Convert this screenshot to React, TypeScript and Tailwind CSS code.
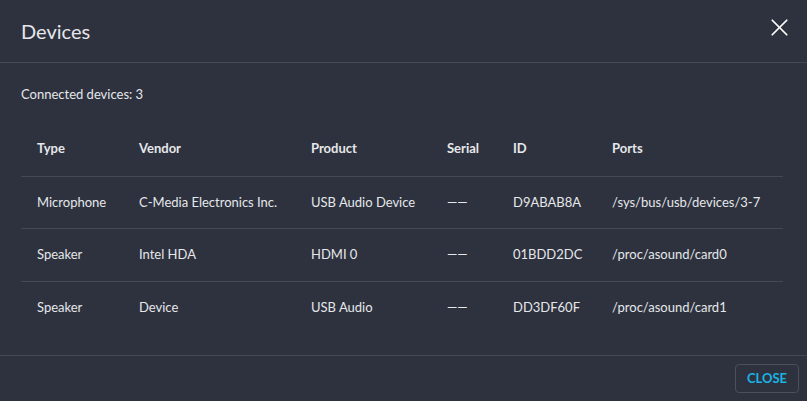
import { X } from "lucide-react";

const rows = [
  { type: "Microphone", vendor: "C-Media Electronics Inc.", product: "USB Audio Device", serial: "——", id: "D9ABAB8A", ports: "/sys/bus/usb/devices/3-7" },
  { type: "Speaker", vendor: "Intel HDA", product: "HDMI 0", serial: "——", id: "01BDD2DC", ports: "/proc/asound/card0" },
  { type: "Speaker", vendor: "Device", product: "USB Audio", serial: "——", id: "DD3DF60F", ports: "/proc/asound/card1" },
];

const cols = ["w-[102px]", "w-[172px]", "w-[136px]", "w-[66px]", "w-[99px]", "w-[187px]"];

export default function App() {
  return (
    <div className="w-[807px] h-[401px] bg-[#2d323e] text-[#e6e7ea] flex flex-col font-['Lato',sans-serif]">
      {/* HEADER */}
      <div className="h-[63px] flex items-center justify-between pl-[21px] pr-[13px] border-b border-[#444955]">
        <h2 className="text-[20px] leading-none">Devices</h2>
        <X size={29} strokeWidth={1.4} className="text-white mb-[8px]" />
      </div>

      {/* BODY */}
      <div className="flex-1 px-[21px] pt-[22px]">
        <p className="text-[13px] leading-[18px]">Connected devices: 3</p>
        <table className="mt-[19px] border-collapse text-[13px]">
          <thead>
            <tr className="h-[54px] border-b border-[#444955] font-bold">
              {["Type", "Vendor", "Product", "Serial", "ID", "Ports"].map((h, i) => (
                <th key={h} className={`${cols[i]} text-left pl-4 font-bold`}>{h}</th>
              ))}
            </tr>
          </thead>
          <tbody>
            {rows.map((r, ri) => (
              <tr key={r.id} className={`h-[52.5px] ${ri < rows.length - 1 ? "border-b border-[#444955]" : ""}`}>
                {[r.type, r.vendor, r.product, r.serial, r.id, r.ports].map((c, i) => (
                  <td key={i} className={`${cols[i]} pl-4`}>{c}</td>
                ))}
              </tr>
            ))}
          </tbody>
        </table>
      </div>

      {/* FOOTER */}
      <div className="h-[46px] border-t border-[#444955] flex items-center justify-end pr-2">
        <button className="w-[64px] h-[29px] rounded border border-[#4a4f5b] text-[#1cb3e6] text-[13px] font-bold">
          CLOSE
        </button>
      </div>
    </div>
  );
}
